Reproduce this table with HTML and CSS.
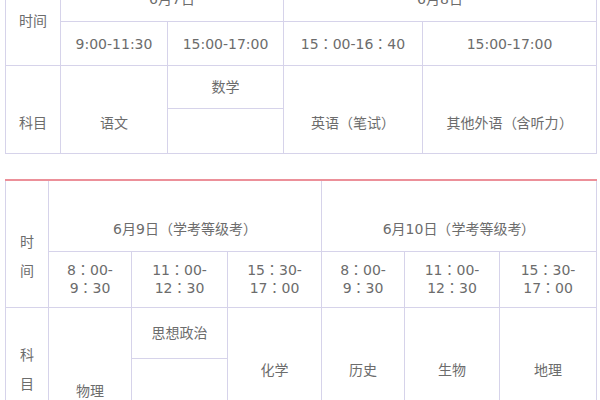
FILE: index.html
```html
<!DOCTYPE html>
<html lang="zh-CN">
<head>
<meta charset="utf-8">
<title>考试时间安排</title>
<link rel="stylesheet" href="styles.css">
</head>
<body>
<div class="page">
  <table class="sched sched-top">
    <colgroup>
      <col class="c55"><col class="c107"><col class="c116"><col class="c139"><col class="c174">
    </colgroup>
    <tr class="h46">
      <td rowspan="2">时间</td>
      <td colspan="2">6月7日</td>
      <td colspan="2">6月8日</td>
    </tr>
    <tr class="h44">
      <td>9:00-11:30</td>
      <td>15:00-17:00</td>
      <td class="tc">15：00-16：40</td>
      <td>15:00-17:00</td>
    </tr>
    <tr class="h43">
      <td rowspan="2" class="low">科目</td>
      <td rowspan="2" class="low">语文</td>
      <td>数学</td>
      <td rowspan="2" class="low">英语<span class="po">（</span>笔试<span class="pc">）</span></td>
      <td rowspan="2" class="low">其他外语<span class="po">（</span>含听力<span class="pc">）</span></td>
    </tr>
    <tr class="h45">
      <td></td>
    </tr>
  </table>

  <table class="sched sched-bottom">
    <colgroup>
      <col class="c43"><col class="c83"><col class="c96"><col class="c94"><col class="c83"><col class="c95"><col class="c97">
    </colgroup>
    <tr class="h71">
      <td rowspan="2" class="vert low">时<br>间</td>
      <td colspan="3" class="low">6月9日<span class="po">（</span>学考等级考<span class="pc">）</span></td>
      <td colspan="3" class="low">6月10日<span class="po">（</span>学考等级考<span class="pc">）</span></td>
    </tr>
    <tr class="h56">
      <td class="tc">8：00-<br>9：30</td>
      <td class="tc">11：00-<br>12：30</td>
      <td class="tc">15：30-<br>17：00</td>
      <td class="tc">8：00-<br>9：30</td>
      <td class="tc">11：00-<br>12：30</td>
      <td class="tc">15：30-<br>17：00</td>
    </tr>
    <tr class="h51">
      <td rowspan="2" class="vert">科<br>目</td>
      <td rowspan="2" class="lower">物理</td>
      <td>思想政治</td>
      <td rowspan="2">化学</td>
      <td rowspan="2">历史</td>
      <td rowspan="2">生物</td>
      <td rowspan="2">地理</td>
    </tr>
    <tr class="h75">
      <td></td>
    </tr>
  </table>
</div>
</body>
</html>
```

FILE: styles.css
```css
html, body {
  margin: 0;
  padding: 0;
  background: #ffffff;
}

body {
  font-family: "DejaVu Sans", "Noto Sans CJK SC", sans-serif;
  font-size: 14px;
  color: #6c6c6c;
  overflow: hidden;
}

.page {
  padding-left: 5px;
  width: 591px;
}

.sched {
  width: 591px;
  border-collapse: collapse;
  table-layout: fixed;
}

.sched td {
  border: 1px solid #d6d3ea;
  text-align: center;
  vertical-align: middle;
  padding: 0;
  line-height: 18px;
}

.sched-top {
  margin-top: -25px;
}

.sched-bottom {
  margin-top: 25px;
  border-top: 2px solid #ec9099;
}

.sched-bottom tr:first-child td {
  border-top: 2px solid #ec9099;
}

.sched td.tc {
  font-family: "DejaVu Sans", "Noto Sans CJK TC", sans-serif;
}

/* full-width brackets drawn centred in their em box */
.po, .pc {
  display: inline-block;
  width: 14px;
  text-align: center;
  font-family: "DejaVu Sans", sans-serif;
}

.low {
  padding-top: 26px !important;
}

.lower {
  padding-top: 42px !important;
}

.vert {
  line-height: 29px !important;
}

.c55 { width: 55px; }
.c107 { width: 107px; }
.c116 { width: 116px; }
.c139 { width: 139px; }
.c174 { width: 174px; }
.c43 { width: 43px; }
.c83 { width: 83px; }
.c96 { width: 96px; }
.c94 { width: 94px; }
.c95 { width: 95px; }
.c97 { width: 97px; }

.h46 { height: 46px; }
.h44 { height: 44px; }
.h43 { height: 43px; }
.h45 { height: 45px; }
.h71 { height: 71px; }
.h56 { height: 56px; }
.h51 { height: 51px; }
.h75 { height: 75px; }
```
